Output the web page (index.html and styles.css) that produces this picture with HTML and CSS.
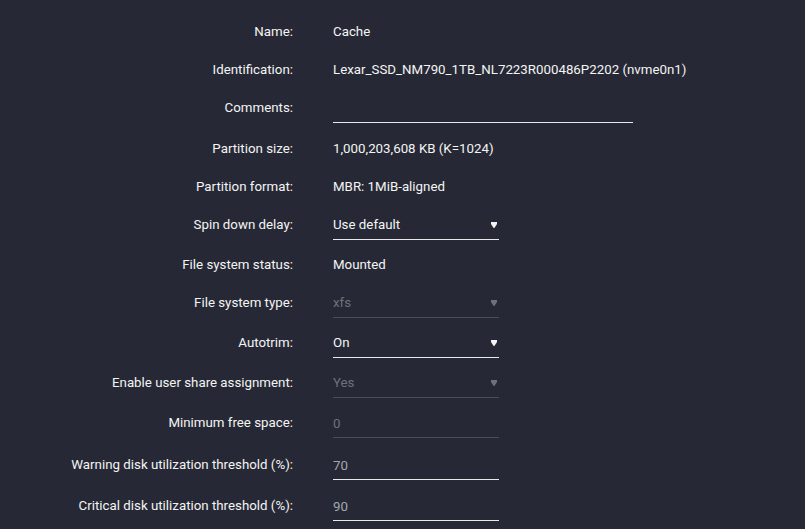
FILE: index.html
```html
<!DOCTYPE html>
<html lang="en">
<head>
    <meta charset="UTF-8">
    <title>Cache Settings</title>
    <link rel="stylesheet" href="styles.css">
</head>
<body>
    <form class="settings">
        <div class="row">
            <span class="label">Name:</span>
            <span class="value">Cache</span>
        </div>
        <div class="row">
            <span class="label">Identification:</span>
            <span class="value">Lexar_SSD_NM790_1TB_NL7223R000486P2202 (nvme0n1)</span>
        </div>
        <div class="row inp">
            <span class="label">Comments:</span>
            <input type="text" class="field wide" value="">
        </div>
        <div class="row">
            <span class="label">Partition size:</span>
            <span class="value">1,000,203,608 KB (K=1024)</span>
        </div>
        <div class="row">
            <span class="label">Partition format:</span>
            <span class="value">MBR: 1MiB-aligned</span>
        </div>
        <div class="row sel">
            <span class="label">Spin down delay:</span>
            <div class="select">
                <select class="field"><option>Use default</option></select>
                <svg class="caret" width="6" height="6" viewBox="0 0 6 6"><polygon points="0,0 6,0 6,2 3.4,6 2.6,6 0,2"/></svg>
            </div>
        </div>
        <div class="row">
            <span class="label">File system status:</span>
            <span class="value">Mounted</span>
        </div>
        <div class="row sel">
            <span class="label">File system type:</span>
            <div class="select off">
                <select class="field" disabled><option>xfs</option></select>
                <svg class="caret" width="6" height="6" viewBox="0 0 6 6"><polygon points="0,0 6,0 6,2 3.4,6 2.6,6 0,2"/></svg>
            </div>
        </div>
        <div class="row sel">
            <span class="label">Autotrim:</span>
            <div class="select">
                <select class="field"><option>On</option></select>
                <svg class="caret" width="6" height="6" viewBox="0 0 6 6"><polygon points="0,0 6,0 6,2 3.4,6 2.6,6 0,2"/></svg>
            </div>
        </div>
        <div class="row sel">
            <span class="label">Enable user share assignment:</span>
            <div class="select off">
                <select class="field" disabled><option>Yes</option></select>
                <svg class="caret" width="6" height="6" viewBox="0 0 6 6"><polygon points="0,0 6,0 6,2 3.4,6 2.6,6 0,2"/></svg>
            </div>
        </div>
        <div class="row inp tall">
            <span class="label">Minimum free space:</span>
            <input type="text" class="field" value="0" disabled>
        </div>
        <div class="row inp">
            <span class="label">Warning disk utilization threshold (%):</span>
            <input type="text" class="field num" value="70">
        </div>
        <div class="row inp">
            <span class="label">Critical disk utilization threshold (%):</span>
            <input type="text" class="field num" value="90">
        </div>
    </form>
</body>
</html>
```
FILE: styles.css
```css
body {
    margin: 0;
    background-color: #262935;
    color: #f4f4f4;
    font-family: Roboto, "Noto Sans", sans-serif;
    font-size: 13.3px;
}
.settings {
    padding-top: 22px;
}
.row {
    display: flex;
    align-items: flex-start;
    height: 38px;
}
.row.sel {
    height: 40px;
}
.row.inp {
    height: 41px;
}
.row.tall {
    height: 42px;
}
.label {
    width: 293px;
    margin-right: 40px;
    text-align: right;
    line-height: 20px;
}
.value {
    line-height: 20px;
    color: #f4f4f4;
}
.field {
    box-sizing: border-box;
    width: 166px;
    height: 25px;
    margin: 0;
    padding: 0 0 4px 0;
    border: none;
    border-bottom: 1px solid #e8e8e8;
    border-radius: 0;
    background: transparent;
    color: #f4f4f4;
    font-family: inherit;
    font-size: inherit;
    line-height: 20px;
    outline: none;
    -webkit-appearance: none;
    appearance: none;
}
.field.wide {
    width: 300px;
}
.field.num {
    color: #a3a7b0;
}
.field:disabled {
    color: #6e717b;
    border-bottom-color: #4a4c56;
    opacity: 1;
}
.select {
    position: relative;
}
.caret {
    position: absolute;
    right: 2px;
    top: 7px;
    fill: #f4f4f4;
}
.select.off .caret {
    fill: #6e717b;
}
```
